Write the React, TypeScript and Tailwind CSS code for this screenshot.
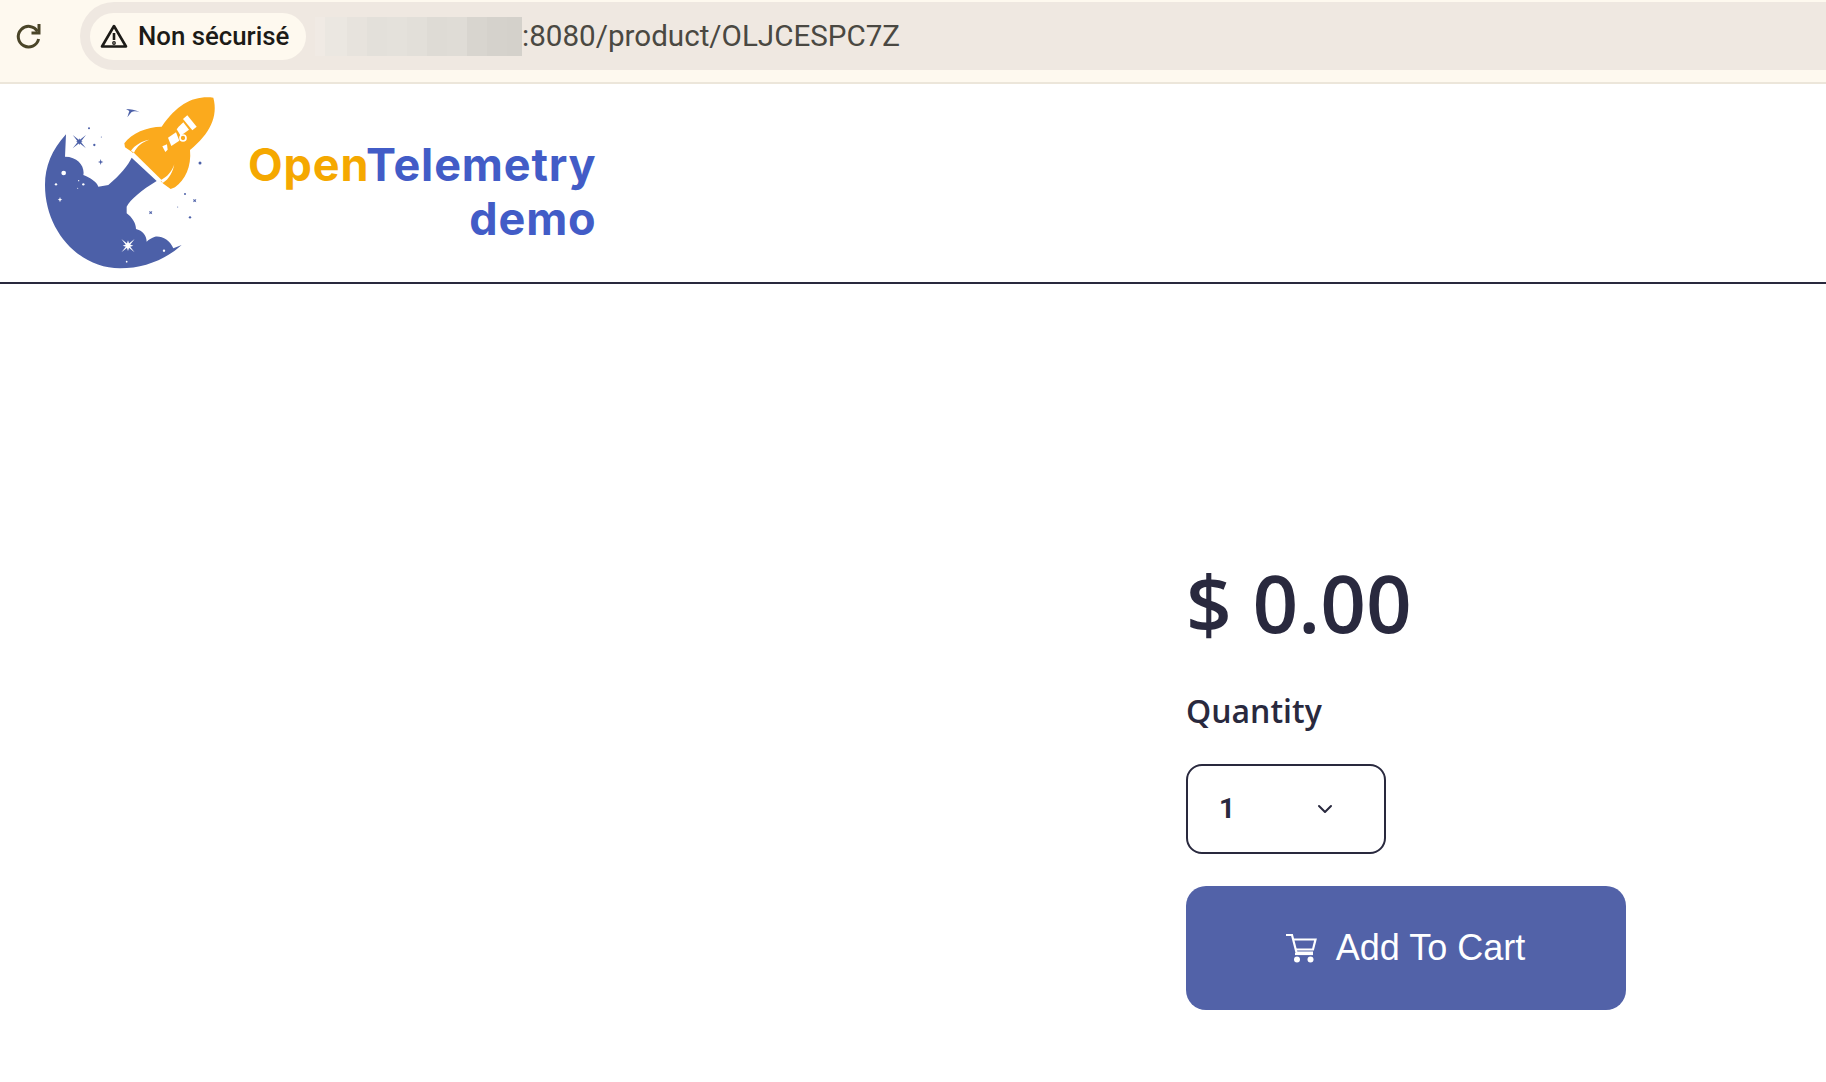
import React from "react";
import { ChevronDown } from "lucide-react";

const blurBlocks = [
  ["#f0eae4", 10], ["#ebe7e1", 22], ["#e7e3dd", 20], ["#e3e0da", 20], ["#e4e1db", 20], ["#e2dfd9", 20],
  ["#dedbd5", 20], ["#dfdcd6", 20], ["#d8d5cf", 20], ["#d5d2cc", 20], ["#d4d1cb", 15],
] as const;

function Logo() {
  return (
    <svg viewBox="0 0 600 600" className="w-[200px] h-[200px] shrink-0">
      <path
        fill="#4c60a8"
        d="M108 148 C65 195 45 245 45 300 C45 440 150 550 270 550 C340 550 405 525 455 480 L430 490 C420 465 395 452 375 455 C365 458 355 464 350 470 C350 450 335 436 318 432 C318 415 305 395 290 385 L290 365 C300 345 335 315 380 288 L305 218 C295 240 270 270 235 300 L205 305 C200 290 180 278 160 270 C165 245 145 215 105 215 Z"
      />
      <path
        fill="#fbaa1d"
        d="M550 38 C490 32 445 55 395 125 C350 125 305 145 283 175 L285 187 L305 200 L400 296 L422 312 L435 307 C465 285 485 245 480 195 C540 145 565 95 550 38 Z"
      />
      <path d="M308 205 L392 288" stroke="#fff" strokeWidth="8" fill="none" />
      <path d="M303 197 C315 180 335 168 358 164 C335 172 322 182 312 203 Z" fill="#fff" />
      <path d="M398 294 C418 282 428 262 433 238 C425 262 412 275 392 286 Z" fill="#fff" />
      <g fill="#fff">
        <path d="M472 91 L500 125 L487 136 L459 102 Z" />
        <path d="M446 125 L460 112 L477 134 L452 152 L440 133 Z" />
        <path d="M414 158 L438 142 L448 167 L424 183 Z" />
        <path d="M397 184 L411 178 L413 194 L406 201 Z" />
      </g>
      <circle cx="459" cy="159" r="9" fill="none" stroke="#fff" strokeWidth="5" />
      <g fill="#4c60a8">
        <path transform="rotate(45 148 170)" d="M148 142 L151 167 L176 170 L151 173 L148 198 L145 173 L120 170 L145 167 Z" />
        <path d="M148 160 L151 167 L158 170 L151 173 L148 180 L145 173 L138 170 L145 167 Z" />
        <path d="M212 222 L214 229 L220 231 L214 233 L212 240 L210 233 L204 231 L210 229 Z" />
        <path transform="rotate(45 494 347)" d="M494 340 L496 345 L501 347 L496 349 L494 354 L492 349 L487 347 L492 345 Z" />
        <path transform="rotate(45 362 383)" d="M362 376 L364 381 L369 383 L364 385 L362 390 L360 385 L355 383 L360 381 Z" />
        <path d="M288 72 C300 72 318 74 329 82 C318 78 310 78 304 82 L292 97 L298 78 Z" />
        <circle cx="177" cy="130" r="3" />
        <circle cx="193" cy="180" r="3.5" />
        <circle cx="214" cy="156" r="1.5" />
        <circle cx="510" cy="234" r="4.5" />
        <circle cx="465" cy="327" r="3" />
        <circle cx="480" cy="397" r="3.5" />
        <circle cx="443" cy="366" r="1.5" />
      </g>
      <g fill="#fff">
        <path transform="rotate(45 294 482)" d="M294 454 L297 479 L322 482 L297 485 L294 510 L291 485 L266 482 L291 479 Z" />
        <path d="M294 466 L298 478 L310 482 L298 486 L294 498 L290 486 L278 482 L290 478 Z" />
        <path d="M90 336 L92 342 L97 344 L92 346 L90 352 L88 346 L83 344 L88 342 Z" />
        <circle cx="101" cy="264" r="7" />
        <circle cx="78" cy="298" r="3.5" />
        <circle cx="160" cy="298" r="3.5" />
        <circle cx="146" cy="287" r="2" />
        <circle cx="143" cy="310" r="1.5" />
        <circle cx="402" cy="497" r="3.5" />
        <circle cx="290" cy="530" r="2.5" />
      </g>
    </svg>
  );
}

function CartIcon() {
  return (
    <svg viewBox="0 0 32 30" className="w-[32px] h-[30px]" fill="none" stroke="#fff" strokeWidth="2.2">
      <path d="M1 2 H7 L11.5 19.5 H28" />
      <path d="M8 6.5 H30.5 L28 16.5 H10.5" />
      <path d="M10 21 H28" />
      <circle cx="12" cy="26.5" r="3" fill="#fff" stroke="none" />
      <circle cx="25.5" cy="26.5" r="3" fill="#fff" stroke="none" />
    </svg>
  );
}

function ReloadIcon() {
  return (
    <svg viewBox="0 0 28 28" className="w-[28px] h-[28px]" fill="none" stroke="#4a4528" strokeWidth="3">
      <path d="M22.5 9.5 A10.3 10.3 0 1 0 23.6 17" />
      <path d="M24 2 V11 H16.5" />
    </svg>
  );
}

export default function App() {
  return (
    <div className="min-h-[1082px] bg-white font-['Roboto',sans-serif]">
      <div className="h-[84px] bg-[#fef9ef] border-b-2 border-[#ece6da] flex items-start pt-[2px] pl-[15px]">
        <div className="w-[28px] mt-[20px] shrink-0">
          <ReloadIcon />
        </div>
        <div className="ml-[37px] flex-1 h-[68px] bg-[#efe8e1] rounded-l-[34px] flex items-center pl-[10px]">
          <div className="h-[47px] w-[216px] bg-[#fef9ef] rounded-full flex items-center pl-[10px] gap-[10px] shrink-0">
            <svg viewBox="0 0 28 26" className="w-[28px] h-[26px]" fill="none" stroke="#1c1b17" strokeWidth="2.6">
              <path d="M14 3 L26 23.5 H2 Z" strokeLinejoin="round" />
              <path d="M14 10 V17" />
              <circle cx="14" cy="20" r="0.6" fill="#1c1b17" />
            </svg>
            <span className="text-[25.8px] font-medium text-[#1c1b17] whitespace-nowrap">Non sécurisé</span>
          </div>
          <div className="ml-[9px] flex h-[39px]">
            {blurBlocks.map(([c, w], i) => (
              <div key={i} className="h-full" style={{ backgroundColor: c, width: w }} />
            ))}
          </div>
          <span className="text-[29.6px] text-[#4a4842] whitespace-nowrap">:8080/product/OLJCESPC7Z</span>
        </div>
      </div>

      <header className="h-[200px] border-b-2 border-[#29293e] flex items-center pl-[30px]">
        <div className="mt-[4px] shrink-0">
          <Logo />
        </div>
        <div className="ml-[18px] flex flex-col items-end font-['Inter',sans-serif] font-bold text-[45px] leading-[54px] text-[#425cc7] tracking-[0.85px] mt-[17px]">
          <span>
            <span className="text-[#f5a800]">Open</span>Telemetry
          </span>
          <span>demo</span>
        </div>
      </header>

      <main className="flex">
        <div className="w-[1186px] shrink-0" />
        <div className="w-[440px] pt-[268px] flex flex-col items-start text-[#29293e]">
          <div className="font-['Open_Sans',sans-serif] font-[650] text-[80px] leading-[100px]">$ 0.00</div>
          <div className="mt-[37px] font-['Open_Sans',sans-serif] font-semibold text-[32px] leading-[44px]">Quantity</div>
          <div className="mt-[31px] w-[200px] h-[90px] border-2 border-[#29293e] rounded-[16px] flex items-center pl-[31px]">
            <span className="font-['Roboto',sans-serif] font-bold text-[28px]">1</span>
            <ChevronDown className="ml-[78px] w-[24px] h-[24px]" strokeWidth={2} />
          </div>
          <button className="mt-[32px] w-full h-[124px] bg-[#5262a8] rounded-[20px] flex items-center justify-center gap-[19px] pr-[2px] text-white font-['Liberation_Sans',sans-serif] text-[36px]">
            <CartIcon />
            <span>Add To Cart</span>
          </button>
        </div>
      </main>
    </div>
  );
}
